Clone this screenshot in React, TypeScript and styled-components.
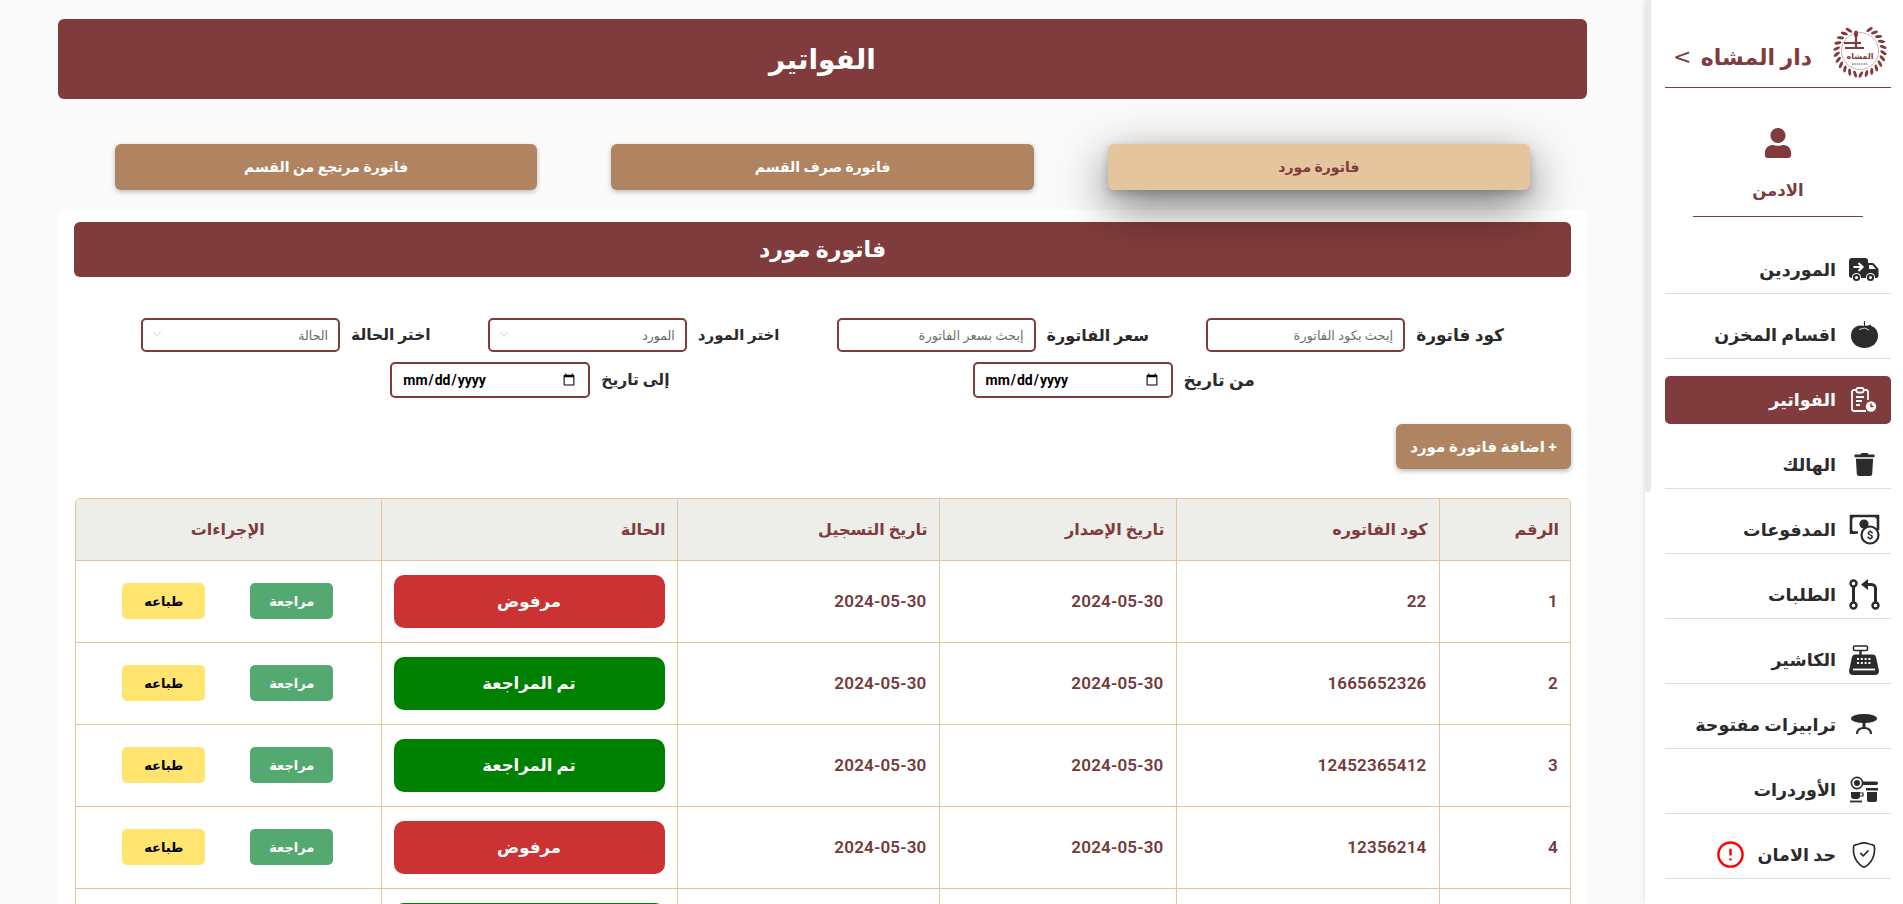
import styled, { createGlobalStyle } from 'styled-components';
import { ChevronDown } from 'lucide-react';
import { FaUser, FaTrash } from 'react-icons/fa';
import { BsShieldCheck } from 'react-icons/bs';
import { FiAlertCircle } from 'react-icons/fi';

const maroon = '#803c3c';
const tan = '#b08460';
const sand = '#e5c59d';
const ink = '#2b2b2b';
const fontStack = 'Roboto, "DejaVu Sans", sans-serif';

const GlobalStyle = createGlobalStyle`
    * { box-sizing: border-box; }
    html, body { margin: 0; padding: 0; height: 100%; overflow: hidden; }
    body { font-family: ${fontStack}; background: #fafafa; }
`;

const Page = styled.div`
    display: flex;
    height: 904px;
    overflow: hidden;
`;

const Sidebar = styled.aside`
    flex: 0 0 258px;
    min-width: 0;
    display: flex;
    background: #fff;
    box-shadow: 0 0 6px rgba(0, 0, 0, 0.12);
    position: relative;
    z-index: 2;
`;

const SideContent = styled.div`
    flex: 1;
    min-width: 0;
    padding: 0 12px 0 14px;
`;

const ScrollTrack = styled.div`
    flex: 0 0 6px;
`;

const ScrollThumb = styled.div`
    height: 492px;
    background: #e9e9e9;
    border-radius: 0 0 3px 3px;
`;

const Brand = styled.div`
    height: 88px;
    display: flex;
    align-items: flex-end;
    padding-bottom: 9px;
    border-bottom: 1px solid ${maroon};
`;

const BrandName = styled.div`
    flex: none;
    margin-right: 17px;
    color: ${maroon};
    font-size: 22px;
    font-weight: 700;
    padding-bottom: 8px;
    white-space: nowrap;
`;

const Caret = styled.span`
    color: ${maroon};
    font-size: 22px;
    font-family: "DejaVu Sans", sans-serif;
    margin: 0 auto 0 8px;
    padding-bottom: 9px;
`;

const Profile = styled.div`
    display: flex;
    flex-direction: column;
    align-items: center;
    padding-top: 40px;
    color: ${maroon};
`;

const ProfileName = styled.div`
    font-size: 16.5px;
    font-weight: 700;
    margin-top: 21px;
    height: 37px;
    line-height: 24px;
`;

const ProfileRule = styled.div`
    width: 170px;
    height: 1px;
    background: ${maroon};
`;

const Menu = styled.nav`
    display: flex;
    flex-direction: column;
    gap: 17px;
    margin-top: 29px;
`;

const MenuItem = styled.div<{ $active?: boolean }>`
    height: 48px;
    display: flex;
    align-items: center;
    gap: 12px;
    padding-right: 11px;
    color: ${({ $active }) => ($active ? '#fff' : ink)};
    background: ${({ $active }) => ($active ? maroon : 'transparent')};
    border-radius: ${({ $active }) => ($active ? '5px' : '0')};
    border-bottom: 1px solid ${({ $active }) => ($active ? 'transparent' : '#dddddd')};
    font-size: 17.5px;
    font-weight: 700;
    white-space: nowrap;
`;

const MenuIcon = styled.span`
    flex: 0 0 32px;
    display: flex;
    align-items: center;
    justify-content: center;
`;

const AlertBadge = styled.span`
    display: flex;
    color: #f00;
    margin-right: 1px;
`;

const Main = styled.main`
    flex: 1;
    min-width: 0;
    padding: 19px 58px 0;
`;

const TitleBar = styled.h1`
    margin: 0;
    height: 80px;
    display: flex;
    align-items: center;
    justify-content: center;
    background: ${maroon};
    color: #fff;
    font-size: 28px;
    font-weight: 700;
    border-radius: 6px;
`;

const Tabs = styled.div`
    display: grid;
    grid-template-columns: repeat(3, 1fr);
    gap: 74px;
    margin-top: 45px;
    padding: 0 57px;
`;

const Tab = styled.button<{ $active?: boolean }>`
    height: 46px;
    border: 0;
    border-radius: 6px;
    font-family: inherit;
    font-size: 14px;
    font-weight: 700;
    position: relative;
    z-index: ${({ $active }) => ($active ? 1 : 0)};
    background: ${({ $active }) => ($active ? sand : tan)};
    color: ${({ $active }) => ($active ? maroon : '#fff')};
    box-shadow: ${({ $active }) =>
        $active
            ? '0 4px 8px rgba(0, 0, 0, 0.2), 0 16px 48px rgba(0, 0, 0, 0.55)'
            : '0 2px 5px rgba(0, 0, 0, 0.25)'};
`;

const Card = styled.section`
    margin-top: 20px;
    padding: 12px 16px;
    background: #fff;
    border-radius: 6px;
`;

const SectionHeader = styled.h2`
    margin: 0;
    height: 55px;
    display: flex;
    align-items: center;
    justify-content: center;
    background: ${maroon};
    color: #fff;
    font-size: 22px;
    font-weight: 700;
    border-radius: 6px;
`;

const FilterRow = styled.div`
    display: flex;
    justify-content: space-between;
    padding: 0 67px;
    margin-top: 41px;
`;

const DateRow = styled.div`
    display: flex;
    justify-content: center;
    gap: 303px;
    margin-top: 10px;
`;

const Field = styled.label<{ $size?: number }>`
    display: flex;
    align-items: center;
    gap: 11px;
    color: ${ink};
    font-size: ${({ $size }) => $size ?? 17}px;
    font-weight: 700;
    white-space: nowrap;
`;

const TextInput = styled.input`
    width: 199px;
    height: 34px;
    padding: 0 10px;
    border: 2px solid ${maroon};
    border-radius: 5px;
    background: #fff;
    font-family: inherit;
    font-size: 13px;
    &::placeholder { color: #6f6f6f; }
`;

const SelectWrap = styled.span`
    position: relative;
    display: block;
`;

const SelectBox = styled.select`
    display: block;
    width: 199px;
    height: 34px;
    padding: 0 10px;
    border: 2px solid ${maroon};
    border-radius: 5px;
    background: #fff;
    font-family: inherit;
    font-size: 12.5px;
    color: #666;
    appearance: none;
`;

const SelectCaret = styled.span`
    position: absolute;
    left: 9px;
    top: 9px;
    display: flex;
    color: #aaa;
    pointer-events: none;
`;

const DateInput = styled.input`
    width: 200px;
    height: 36px;
    padding: 0 10px;
    border: 2px solid ${maroon};
    border-radius: 5px;
    background: #fff;
    font-family: inherit;
    font-size: 14px;
    font-weight: 700;
    direction: ltr;
`;

const ActionBar = styled.div`
    display: flex;
    margin-top: 26px;
`;

const AddButton = styled.button`
    width: 175px;
    height: 45px;
    border: 0;
    border-radius: 6px;
    background: ${tan};
    color: #fff;
    font-family: inherit;
    font-size: 15px;
    font-weight: 700;
    white-space: nowrap;
    padding: 0;
    box-shadow: 0 2px 5px rgba(0, 0, 0, 0.3);
`;

const TableWrap = styled.div`
    margin: 29px 0 0 0;
    margin-left: 1px;
    border: 1px solid ${sand};
    border-radius: 5px;
    overflow: hidden;
`;

const Table = styled.table`
    width: 100%;
    table-layout: fixed;
    border-collapse: collapse;
`;

const Th = styled.th<{ $center?: boolean }>`
    height: 61px;
    padding: 0 11px;
    background: #edede9;
    border: 1px solid ${sand};
    border-top: 0;
    color: ${maroon};
    font-size: 16px;
    font-weight: 700;
    text-align: ${({ $center }) => ($center ? 'center' : 'right')};
    &:first-child { border-right: 0; }
    &:last-child { border-left: 0; }
`;

const Td = styled.td`
    height: 82px;
    padding: 0 12px;
    border: 1px solid ${sand};
    color: #74393a;
    font-size: 17px;
    font-weight: 600;
    letter-spacing: 0.2px;
    text-align: right;
    &:first-child { border-right: 0; }
    &:last-child { border-left: 0; }
`;

const StatusPill = styled.div<{ $ok: boolean }>`
    height: 53px;
    display: flex;
    align-items: center;
    justify-content: center;
    border-radius: 10px;
    background: ${({ $ok }) => ($ok ? '#008000' : '#cb3234')};
    color: #fff;
    font-size: 16.5px;
    font-weight: 700;
    letter-spacing: 0;
`;

const RowActions = styled.div`
    display: flex;
    justify-content: center;
    gap: 45px;
`;

const RowButton = styled.button<{ $print?: boolean }>`
    width: 83px;
    height: 36px;
    border: 0;
    border-radius: 5px;
    font-family: inherit;
    font-size: 13px;
    font-weight: 700;
    background: ${({ $print }) => ($print ? '#ffe570' : '#54a970')};
    color: ${({ $print }) => ($print ? '#000' : '#fff')};
`;

const LogoText = styled.text`
    font-family: "DejaVu Sans", sans-serif;
    font-size: 8px;
    font-weight: 700;
    fill: ${maroon};
`;

const Logo = () => {
    const leaves = [];
    for (let a = 24; a <= 336; a += 14) {
        leaves.push(
            <ellipse
                key={a}
                cx="31"
                cy="3.5"
                rx="1.5"
                ry="3.6"
                fill={maroon}
                transform={`rotate(${a} 31 27) rotate(${a < 180 ? 30 : -30} 31 3.5)`}
            />
        );
    }
    return (
        <svg width="62" height="54" viewBox="0 0 62 54">
            {leaves}
            <circle cx="31" cy="27" r="18.5" fill="none" stroke={maroon} strokeWidth="0.4" />
            <path d="M15 19h17M16 24h19M27 11v14" fill="none" stroke={maroon} strokeWidth="2.2" />
            <ellipse cx="27" cy="10" rx="2" ry="3.4" fill={maroon} />
            <LogoText x="31" y="35" textAnchor="middle">المشاه</LogoText>
            <path d="M23 40h16" stroke={maroon} strokeWidth="1" strokeDasharray="1.5 0.8" />
        </svg>
    );
};

const TruckIcon = () => (
    <svg width="30" height="24" viewBox="0 0 30 24">
        <path d="M3 0h13a3 3 0 0 1 3 3v2h4.5a2 2 0 0 1 1.5.7l4 4.6c.4.4.5.9.5 1.4V18a2 2 0 0 1-2 2H3a3 3 0 0 1-3-3V3a3 3 0 0 1 3-3z" fill={ink} />
        <path d="M20 7h3.4l3.4 4H20z" fill="#fff" />
        <path d="M4.5 9h9M9.5 5l4 4-4 4" fill="none" stroke="#fff" strokeWidth="2.2" />
        <circle cx="7.5" cy="19.5" r="4.5" fill="#fff" />
        <circle cx="7.5" cy="19.5" r="2.6" fill="none" stroke={ink} strokeWidth="2" />
        <circle cx="21.5" cy="19.5" r="4.5" fill="#fff" />
        <circle cx="21.5" cy="19.5" r="2.6" fill="none" stroke={ink} strokeWidth="2" />
    </svg>
);

const TomatoIcon = () => (
    <svg width="27" height="27" viewBox="0 0 27 27">
        <path d="M13.5 5C18 3.5 27 5 27 15c0 7-6 12-13.5 12S0 22 0 15C0 5 9 3.5 13.5 5z" fill={ink} />
        <path d="M13.5 0v7M7 5l6.5 2L20 4M9 9l4.5-2L17 10" fill="none" stroke={ink} strokeWidth="1.2" />
        <path d="M8 8.5l5.5-1.5 4.5 2" fill="none" stroke="#fff" strokeWidth="0.8" />
    </svg>
);

const ClipboardIcon = () => (
    <svg width="26" height="26" viewBox="0 0 26 26" fill="none" stroke="#fff" strokeWidth="1.8">
        <path d="M15 24H3a2 2 0 0 1-2-2V5a2 2 0 0 1 2-2h12a2 2 0 0 1 2 2v8" />
        <rect x="5.5" y="1" width="7" height="4.5" rx="1.5" fill={maroon} />
        <path d="M5 10h8M5 14h6M5 18h4" />
        <circle cx="20" cy="19.5" r="5.2" fill="#fff" stroke="none" />
        <path d="M20 16.5v3h2.5" stroke={maroon} strokeWidth="1.4" />
    </svg>
);

const MoneyIcon = () => (
    <svg width="31" height="31" viewBox="0 0 31 31">
        <path d="M9 18.5H2V2h27v14" fill="none" stroke={ink} strokeWidth="2.6" />
        <path d="M1 1h6L1 7zM30 1h-6l6 6zM1 20v-6l6 6z" fill={ink} />
        <circle cx="15" cy="10" r="4.6" fill={ink} />
        <circle cx="21" cy="21" r="8.5" fill="#fff" stroke={ink} strokeWidth="2.2" />
        <text x="21" y="25" fontSize="11.5" fontWeight="700" fill={ink} textAnchor="middle" fontFamily="Roboto, sans-serif">$</text>
    </svg>
);

const RequestsIcon = () => (
    <svg width="31" height="31" viewBox="0 0 31 31" fill="none" stroke={ink}>
        <circle cx="4.5" cy="4.5" r="3" strokeWidth="2.4" />
        <circle cx="4.5" cy="26.5" r="3" strokeWidth="2.4" />
        <circle cx="26.5" cy="26.5" r="3" strokeWidth="2.4" />
        <path d="M4.5 8v15" strokeWidth="3" />
        <path d="M18 5.5h4.5a4 4 0 0 1 4 4V23" strokeWidth="3" />
        <path d="M12 5.5L19 0v11z" fill={ink} stroke="none" />
    </svg>
);

const RegisterIcon = () => (
    <svg width="30" height="30" viewBox="0 0 30 30">
        <rect x="4.5" y="1" width="14" height="4.5" rx="1.2" fill="none" stroke={ink} strokeWidth="1.6" />
        <path d="M11.5 5.5v5" stroke={ink} strokeWidth="2.4" />
        <path d="M6 9.5h18a3 3 0 0 1 3 2.5l3 14a4 4 0 0 1-4 4H4a4 4 0 0 1-4-4l3-14a3 3 0 0 1 3-2.5z" fill={ink} />
        <path d="M8 14h14M8 18h14" stroke="#fff" strokeWidth="2" strokeDasharray="2 1.8" />
        <path d="M4 24.5h22" stroke="#fff" strokeWidth="1.8" />
    </svg>
);

const TableIcon = () => (
    <svg width="26" height="21" viewBox="0 0 26 21" fill="none" stroke={ink}>
        <ellipse cx="13" cy="4.5" rx="13" ry="4.5" fill={ink} stroke="none" />
        <path d="M13 8v6" strokeWidth="3" />
        <path d="M6 20c0-4 3-6 7-6s7 2 7 6" strokeWidth="2.2" />
    </svg>
);

const OrdersIcon = () => (
    <svg width="29" height="27" viewBox="0 0 29 27" fill="none" stroke={ink}>
        <circle cx="7" cy="7" r="5.6" strokeWidth="1.6" />
        <circle cx="7" cy="7" r="3" fill={ink} stroke="none" />
        <rect x="12" y="5.5" width="16" height="3.5" rx="1.7" fill={ink} stroke="none" />
        <path d="M16 12h12v2.5H16z" fill={ink} stroke="none" />
        <path d="M17 16h10v8a2 2 0 0 1-2 2h-6a2 2 0 0 1-2-2z" fill={ink} stroke="none" />
        <path d="M1 16h9v4a3 3 0 0 1-3 3H4a3 3 0 0 1-3-3z" fill={ink} stroke="none" />
        <path d="M10 17h3v3h-3" strokeWidth="1.2" />
        <path d="M0 25.5h12" strokeWidth="1.8" />
    </svg>
);

const menuItems = [
    { label: 'الموردين', icon: <TruckIcon /> },
    { label: 'اقسام المخزن', icon: <TomatoIcon /> },
    { label: 'الفواتير', icon: <ClipboardIcon />, active: true },
    { label: 'الهالك', icon: <FaTrash size={23} color={ink} /> },
    { label: 'المدفوعات', icon: <MoneyIcon /> },
    { label: 'الطلبات', icon: <RequestsIcon /> },
    { label: 'الكاشير', icon: <RegisterIcon /> },
    { label: 'ترابيزات مفتوحة', icon: <TableIcon /> },
    { label: 'الأوردرات', icon: <OrdersIcon /> },
    { label: 'حد الامان', icon: <BsShieldCheck size={26} color={ink} />, alert: true },
];

const invoices = [
    { id: 1, code: '22', ok: false },
    { id: 2, code: '1665652326', ok: true },
    { id: 3, code: '12452365412', ok: true },
    { id: 4, code: '12356214', ok: false },
];

const App = () => (
    <Page dir="rtl">
        <GlobalStyle />
        <Sidebar>
            <SideContent>
                <Brand>
                    <Logo />
                    <BrandName>دار المشاه</BrandName>
                    <Caret>&gt;</Caret>
                </Brand>
                <Profile>
                    <FaUser size={30} />
                    <ProfileName>الادمن</ProfileName>
                    <ProfileRule />
                </Profile>
                <Menu>
                    {menuItems.map((item) => (
                        <MenuItem key={item.label} $active={item.active}>
                            <MenuIcon>{item.icon}</MenuIcon>
                            {item.label}
                            {item.alert && (
                                <AlertBadge>
                                    <FiAlertCircle size={29} />
                                </AlertBadge>
                            )}
                        </MenuItem>
                    ))}
                </Menu>
            </SideContent>
            <ScrollTrack>
                <ScrollThumb />
            </ScrollTrack>
        </Sidebar>
        <Main>
            <TitleBar>الفواتير</TitleBar>
            <Tabs>
                <Tab $active>فاتورة مورد</Tab>
                <Tab>فاتورة صرف القسم</Tab>
                <Tab>فاتورة مرتجع من القسم</Tab>
            </Tabs>
            <Card>
                <SectionHeader>فاتورة مورد</SectionHeader>
                <FilterRow>
                    <Field>
                        كود فاتورة
                        <TextInput placeholder="إبحث بكود الفاتورة" />
                    </Field>
                    <Field $size={16}>
                        سعر الفاتورة
                        <TextInput placeholder="إبحث بسعر الفاتورة" />
                    </Field>
                    <Field $size={15}>
                        اختر المورد
                        <SelectWrap>
                            <SelectBox>
                                <option>المورد</option>
                            </SelectBox>
                            <SelectCaret>
                                <ChevronDown size={14} strokeWidth={1} />
                            </SelectCaret>
                        </SelectWrap>
                    </Field>
                    <Field $size={15.5}>
                        اختر الحالة
                        <SelectWrap>
                            <SelectBox>
                                <option>الحالة</option>
                            </SelectBox>
                            <SelectCaret>
                                <ChevronDown size={14} strokeWidth={1} />
                            </SelectCaret>
                        </SelectWrap>
                    </Field>
                </FilterRow>
                <DateRow>
                    <Field>
                        من تاريخ
                        <DateInput type="date" />
                    </Field>
                    <Field $size={15.5}>
                        إلى تاريخ
                        <DateInput type="date" />
                    </Field>
                </DateRow>
                <ActionBar>
                    <AddButton>+ اضافة فاتورة مورد</AddButton>
                </ActionBar>
                <TableWrap>
                    <Table>
                        <colgroup>
                            <col width="131" />
                            <col width="263" />
                            <col width="237" />
                            <col width="262" />
                            <col width="296" />
                            <col width="306" />
                        </colgroup>
                        <thead>
                            <tr>
                                <Th>الرقم</Th>
                                <Th>كود الفاتوره</Th>
                                <Th>تاريخ الإصدار</Th>
                                <Th>تاريخ التسجيل</Th>
                                <Th>الحالة</Th>
                                <Th $center>الإجراءات</Th>
                            </tr>
                        </thead>
                        <tbody>
                            {invoices.map((row) => (
                                <tr key={row.id}>
                                    <Td>{row.id}</Td>
                                    <Td>{row.code}</Td>
                                    <Td>2024-05-30</Td>
                                    <Td>2024-05-30</Td>
                                    <Td>
                                        <StatusPill $ok={row.ok}>{row.ok ? 'تم المراجعة' : 'مرفوض'}</StatusPill>
                                    </Td>
                                    <Td>
                                        <RowActions>
                                            <RowButton>مراجعة</RowButton>
                                            <RowButton $print>طباعه</RowButton>
                                        </RowActions>
                                    </Td>
                                </tr>
                            ))}
                            {/* only the top edge of the fifth row is on screen */}
                            <tr>
                                <Td />
                                <Td />
                                <Td />
                                <Td />
                                <Td>
                                    <StatusPill $ok />
                                </Td>
                                <Td />
                            </tr>
                        </tbody>
                    </Table>
                </TableWrap>
            </Card>
        </Main>
    </Page>
);

export default App;
